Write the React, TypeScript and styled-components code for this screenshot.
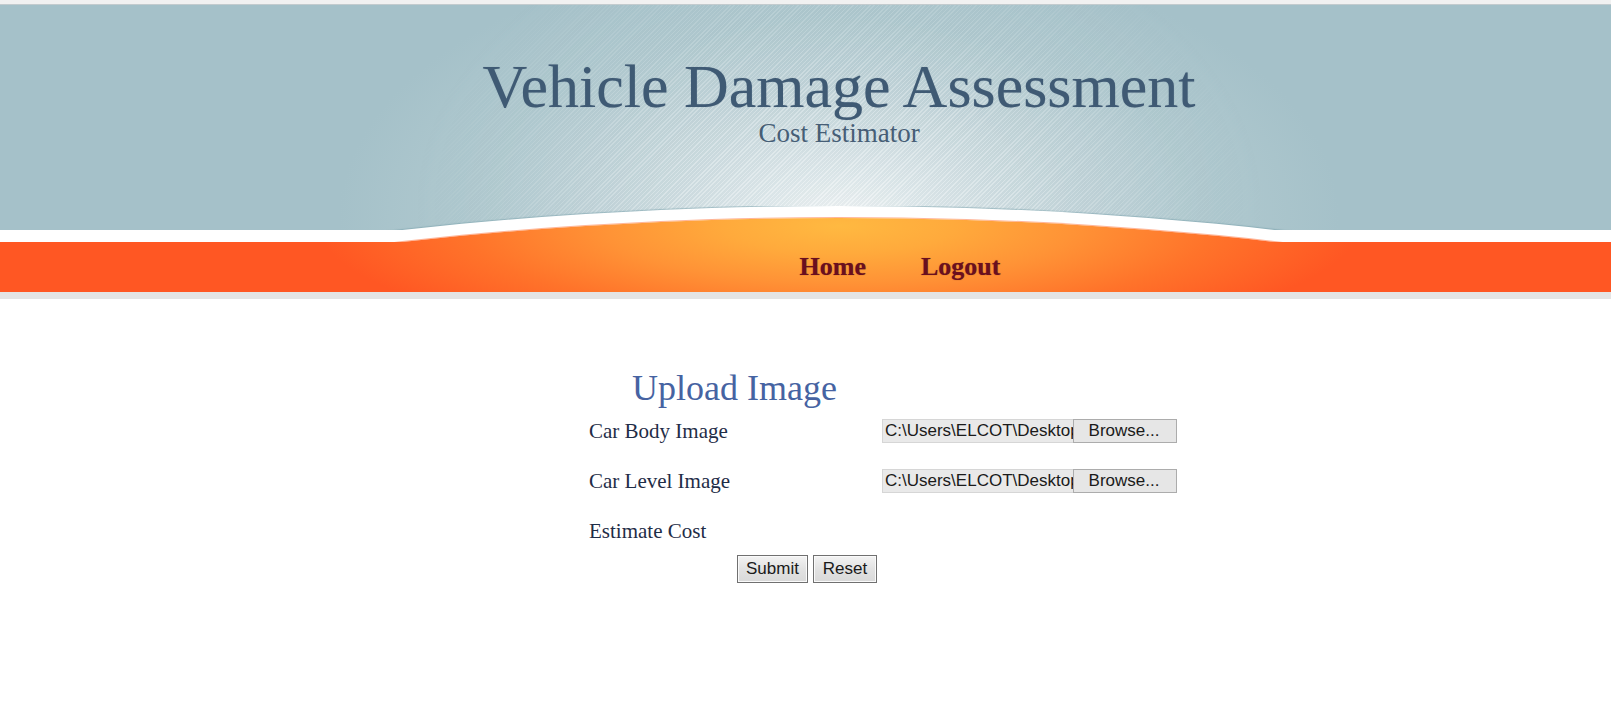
import React from "react";
import styled, { createGlobalStyle } from "styled-components";

const GlobalStyle = createGlobalStyle`
  html, body {
    margin: 0;
    padding: 0;
    background: #ffffff;
    font-family: "Liberation Serif", "Times New Roman", serif;
  }
`;

const CENTER = "calc(50% + 33.5px)";
const orangeGradient = `radial-gradient(ellipse 520px 125px at 839px 226px, #ffb941 0%, #ffaa3c 22%, #ff9336 45%, #ff732a 72%, #ff5723 100%)`;

const Page = styled.div`
  width: 100%;
  min-height: 703px;
  background: #ffffff;
`;

const TopStrip = styled.div`
  height: 4px;
  background: #f1f1f1;
  border-bottom: 1px solid #c3cbce;
`;

const Header = styled.header`
  position: relative;
  height: 225px;
  box-sizing: border-box;
  padding-top: 48px;
  padding-left: 67px;
  background: radial-gradient(
    ellipse 500px 270px at ${CENTER} 212px,
    #f1f5f6 0%,
    #dbe6e9 22%,
    #c3d5da 48%,
    #b0c9cf 72%,
    #a5c1c9 100%
  );
  text-align: center;

  &::before {
    content: "";
    position: absolute;
    inset: 0;
    pointer-events: none;
    background: repeating-linear-gradient(
      135deg,
      rgba(255, 255, 255, 0.22) 0px,
      rgba(255, 255, 255, 0.22) 1px,
      rgba(120, 150, 160, 0.06) 1px,
      rgba(120, 150, 160, 0.06) 3px
    );
    -webkit-mask-image: radial-gradient(ellipse 430px 300px at ${CENTER} 200px, #000 40%, transparent 100%);
    mask-image: radial-gradient(ellipse 430px 300px at ${CENTER} 200px, #000 40%, transparent 100%);
  }
`;

const Title = styled.h1`
  position: relative;
  z-index: 1;
  margin: 0;
  font-family: "Liberation Serif", "Times New Roman", serif;
  font-weight: normal;
  font-size: 62px;
  line-height: 66px;
  color: #3f5a74;
  text-shadow: 0 0 1px rgba(63, 90, 116, 0.35);
`;

const Subtitle = styled.div`
  position: relative;
  z-index: 1;
  margin-top: -1px;
  font-size: 27px;
  line-height: 31px;
  color: #465e76;
`;

const Swoosh = styled.div`
  position: relative;
  margin-top: -24px;
  height: 86px;
  overflow: hidden;

  &::before {
    content: "";
    position: absolute;
    z-index: 0;
    top: 0;
    left: calc(${CENTER} - 1300px);
    width: 2600px;
    height: 830px;
    border-radius: 50%;
    background: #ffffff;
    box-shadow: 0 -1px 1px rgba(120, 160, 172, 0.55);
  }

  &::after {
    content: "";
    position: absolute;
    z-index: 1;
    top: 12px;
    left: calc(${CENTER} - 1300px);
    width: 2600px;
    height: 830px;
    border-radius: 50%;
    background: ${orangeGradient};
    background-attachment: fixed;
    box-shadow: 0 -1px 0 rgba(255, 120, 70, 0.55);
  }
`;

const WhiteBand = styled.div`
  position: relative;
  z-index: 0;
  margin-top: 24px;
  height: 12px;
  background: #ffffff;
`;

const OrangeBar = styled.nav`
  position: relative;
  z-index: 2;
  height: 50px;
  display: flex;
  align-items: center;
  gap: 55px;
  padding-left: calc(50% - 6px);
  box-sizing: border-box;
  background: ${orangeGradient};
  background-attachment: fixed;
`;

const NavLink = styled.a`
  font-family: "Liberation Serif", "Times New Roman", serif;
  font-weight: bold;
  font-size: 26px;
  line-height: 50px;
  color: #6a0f1f;
  text-decoration: none;
  text-shadow: 0 0 1px rgba(60, 0, 10, 0.5);
  cursor: pointer;
`;

const GrayBand = styled.div`
  height: 7px;
  background: #e4e4e4;
`;

const Main = styled.main`
  padding-top: 66px;
`;

const Form = styled.form`
  width: 588px;
  margin-left: calc(50% - 216.5px);
`;

const Heading = styled.h2`
  margin: 3px 0 11px 43px;
  font-family: "Liberation Serif", "Times New Roman", serif;
  font-weight: normal;
  font-size: 36px;
  line-height: 40px;
  color: #4663a2;
`;

const FieldGrid = styled.div`
  display: grid;
  grid-template-columns: 293px 1fr;
  grid-auto-rows: 24px;
  row-gap: 26px;
`;

const Label = styled.label`
  font-size: 21px;
  line-height: 24px;
  color: #1f2d47;
  white-space: nowrap;
`;

const FileField = styled.div`
  display: flex;
  height: 24px;
`;

const PathBox = styled.input`
  box-sizing: border-box;
  width: 191px;
  height: 24px;
  margin: 0;
  padding: 0 0 0 2px;
  border: 1px solid #d6d6d6;
  border-right: none;
  background: #e9e9e9;
  font-family: "Liberation Sans", Arial, sans-serif;
  font-size: 17px;
  color: #1a1a1a;
  outline: none;
`;

const BrowseButton = styled.button`
  box-sizing: border-box;
  width: 104px;
  height: 24px;
  margin: 0;
  padding: 0 2px 0 0;
  text-align: center;
  border: 1px solid #acacac;
  background: #e6e6e6;
  font-family: "Liberation Sans", Arial, sans-serif;
  font-size: 17px;
  color: #1a1a1a;
`;

const Empty = styled.span``;

const ButtonRow = styled.div`
  display: flex;
  justify-content: center;
  gap: 5px;
  margin-top: 12px;
  padding-left: 3px;
`;

const ActionButton = styled.button<{ $w: number }>`
  box-sizing: border-box;
  width: ${(p) => p.$w}px;
  height: 28px;
  margin: 0;
  padding: 0;
  border: 1px solid #707070;
  box-shadow: inset 0 0 0 1px #fafafa;
  background: linear-gradient(#f3f3f3, #e2e2e2 50%, #d9d9d9);
  font-family: "Liberation Sans", Arial, sans-serif;
  font-size: 17px;
  color: #1a1a1a;
`;

export default function App() {
  return (
    <Page>
      <GlobalStyle />
      <TopStrip />
      <Header>
        <Title>Vehicle Damage Assessment</Title>
        <Subtitle>Cost Estimator</Subtitle>
      </Header>
      <Swoosh>
        <WhiteBand />
        <OrangeBar>
          <NavLink>Home</NavLink>
          <NavLink>Logout</NavLink>
        </OrangeBar>
      </Swoosh>
      <GrayBand />
      <Main>
        <Form onSubmit={(e) => e.preventDefault()}>
          <Heading>Upload Image</Heading>
          <FieldGrid>
            <Label>Car Body Image</Label>
            <FileField>
              <PathBox readOnly value={"C:\\Users\\ELCOT\\Desktop\\car_body.jpg"} />
              <BrowseButton type="button">Browse...</BrowseButton>
            </FileField>
            <Label>Car Level Image</Label>
            <FileField>
              <PathBox readOnly value={"C:\\Users\\ELCOT\\Desktop\\car_level.jpg"} />
              <BrowseButton type="button">Browse...</BrowseButton>
            </FileField>
            <Label>Estimate Cost</Label>
            <Empty />
          </FieldGrid>
        </Form>
        <ButtonRow>
          <ActionButton $w={71} type="submit">Submit</ActionButton>
          <ActionButton $w={64} type="reset">Reset</ActionButton>
        </ButtonRow>
      </Main>
    </Page>
  );
}
